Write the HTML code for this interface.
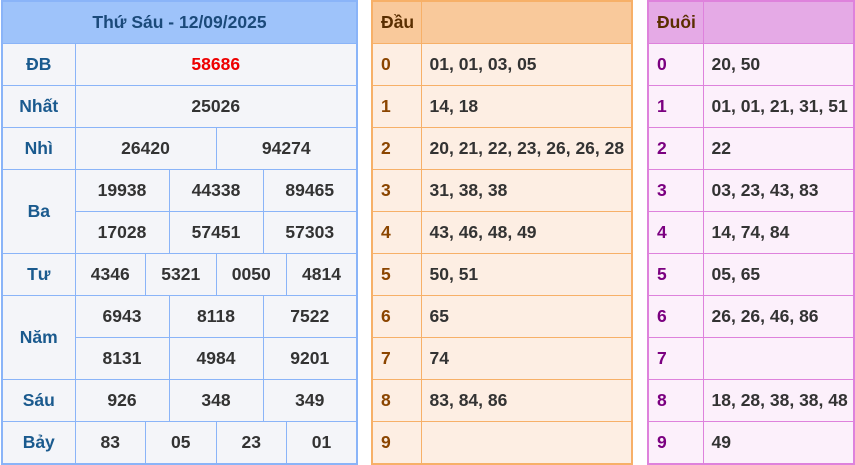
<!DOCTYPE html>
<html><head><meta charset="utf-8"><style>
body{margin:0;width:855px;height:465px;background:#fff;font-family:"Liberation Sans",Arial,sans-serif;font-weight:bold;font-size:17.5px;position:relative;overflow:hidden}
table{position:absolute;top:0px;border-collapse:collapse;table-layout:fixed}
td{height:41px;padding:0;text-align:center;color:#333}
#t1{left:1px;width:357px;border:2px solid #8ab4f8;background:#f4f5f9}
#t1 td{border:1px solid #8ab4f8}
#t1 .h{background:#9ec3fa;color:#1b4a7a}
#t1 .l{color:#1a5a8e}
#t2{left:371px;width:262px;border:2px solid #f7b068;background:#fdeee3}
#t2 td{border:1px solid #f7b068;text-align:left;padding-left:8px}
#t2 .h td{background:#f9c99b;color:#5a2e00}
#t2 .d{color:#8b4500}
#t3{left:647px;width:208px;border:2px solid #de82dc;background:#fcf0fb}
#t3 td{border:1px solid #de82dc;text-align:left;padding-left:8px}
#t3 .h td{background:#e5aae6;color:#5a2e00}
#t3 .d{color:#7b0080}
.r{color:#e00}
</style></head><body>
<table id="t1">
<colgroup><col style="width:73px"><col span="12"></colgroup>
<tr><td class="h" colspan="13">Thứ Sáu - 12/09/2025</td></tr>
<tr><td class="l">ĐB</td><td colspan="12" class="r">58686</td></tr>
<tr><td class="l">Nhất</td><td colspan="12">25026</td></tr>
<tr><td class="l">Nhì</td><td colspan="6">26420</td><td colspan="6">94274</td></tr>
<tr><td class="l" rowspan="2">Ba</td><td colspan="4">19938</td><td colspan="4">44338</td><td colspan="4">89465</td></tr>
<tr><td colspan="4">17028</td><td colspan="4">57451</td><td colspan="4">57303</td></tr>
<tr><td class="l">Tư</td><td colspan="3">4346</td><td colspan="3">5321</td><td colspan="3">0050</td><td colspan="3">4814</td></tr>
<tr><td class="l" rowspan="2">Năm</td><td colspan="4">6943</td><td colspan="4">8118</td><td colspan="4">7522</td></tr>
<tr><td colspan="4">8131</td><td colspan="4">4984</td><td colspan="4">9201</td></tr>
<tr><td class="l">Sáu</td><td colspan="4">926</td><td colspan="4">348</td><td colspan="4">349</td></tr>
<tr><td class="l">Bảy</td><td colspan="3">83</td><td colspan="3">05</td><td colspan="3">23</td><td colspan="3">01</td></tr>
</table>
<table id="t2">
<colgroup><col style="width:49px"><col></colgroup>
<tr class="h"><td>Đầu</td><td></td></tr>
<tr><td class="d">0</td><td>01, 01, 03, 05</td></tr>
<tr><td class="d">1</td><td>14, 18</td></tr>
<tr><td class="d">2</td><td>20, 21, 22, 23, 26, 26, 28</td></tr>
<tr><td class="d">3</td><td>31, 38, 38</td></tr>
<tr><td class="d">4</td><td>43, 46, 48, 49</td></tr>
<tr><td class="d">5</td><td>50, 51</td></tr>
<tr><td class="d">6</td><td>65</td></tr>
<tr><td class="d">7</td><td>74</td></tr>
<tr><td class="d">8</td><td>83, 84, 86</td></tr>
<tr><td class="d">9</td><td></td></tr>
</table>
<table id="t3">
<colgroup><col style="width:55px"><col></colgroup>
<tr class="h"><td>Đuôi</td><td></td></tr>
<tr><td class="d">0</td><td>20, 50</td></tr>
<tr><td class="d">1</td><td>01, 01, 21, 31, 51</td></tr>
<tr><td class="d">2</td><td>22</td></tr>
<tr><td class="d">3</td><td>03, 23, 43, 83</td></tr>
<tr><td class="d">4</td><td>14, 74, 84</td></tr>
<tr><td class="d">5</td><td>05, 65</td></tr>
<tr><td class="d">6</td><td>26, 26, 46, 86</td></tr>
<tr><td class="d">7</td><td></td></tr>
<tr><td class="d">8</td><td>18, 28, 38, 38, 48</td></tr>
<tr><td class="d">9</td><td>49</td></tr>
</table>
</body></html>
